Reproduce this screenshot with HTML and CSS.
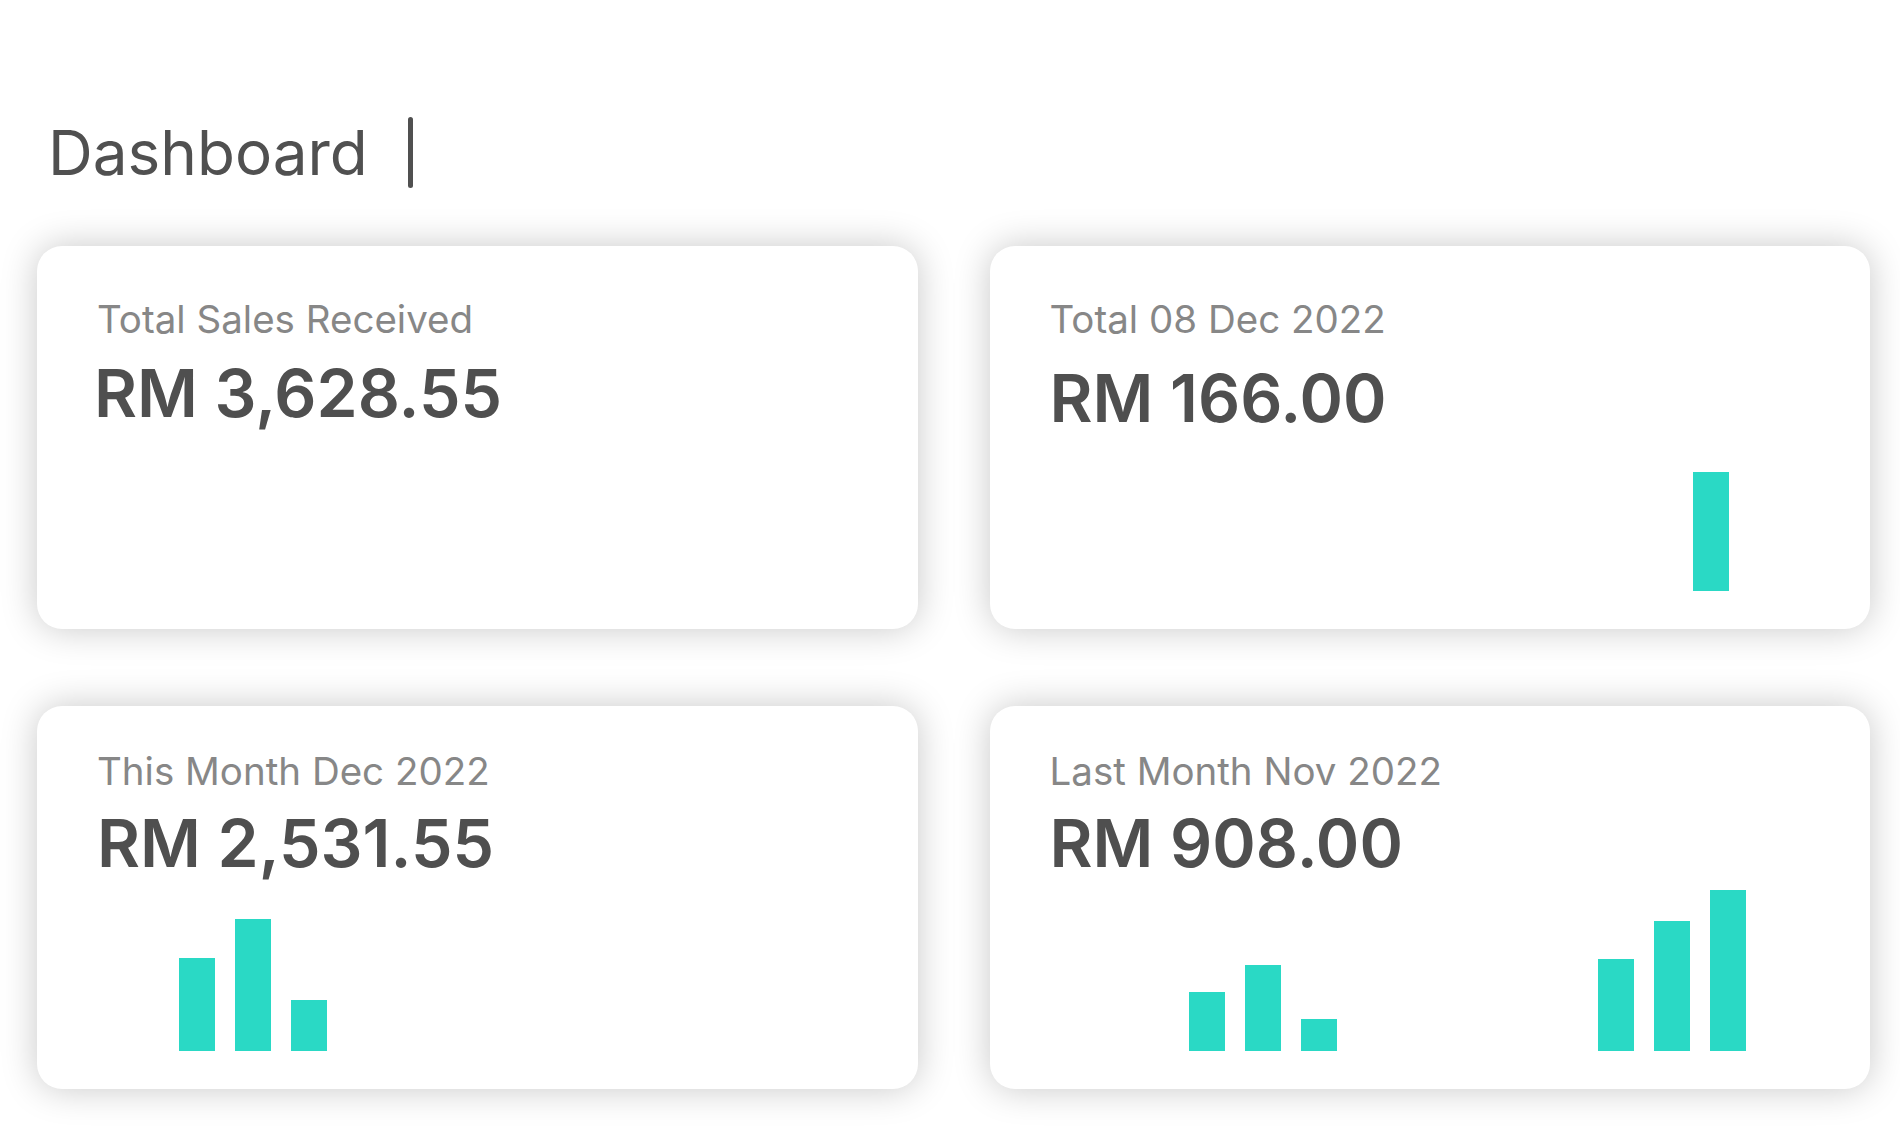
FILE: index.html
```html
<!DOCTYPE html>
<html lang="en">
<head>
  <meta charset="UTF-8">
  <meta name="viewport" content="width=device-width, initial-scale=1.0">
  <title>Dashboard</title>
  <link rel="stylesheet" href="styles.css">
</head>
<body>
  <div class="page">
    <div class="page-title">
      <h1>Dashboard</h1>
      <span class="title-divider"></span>
    </div>

    <div class="cards">
      <div class="card card-upper">
        <div class="card-label">Total Sales Received</div>
        <div class="card-value">RM 3,628.55</div>
      </div>

      <div class="card card-upper card-day">
        <div class="card-label">Total 08 Dec 2022</div>
        <div class="card-value">RM 166.00</div>
        <div class="chart">
          <div class="bar-group group-day">
            <div class="bar" style="height: 119px"></div>
          </div>
        </div>
      </div>

      <div class="card">
        <div class="card-label">This Month Dec 2022</div>
        <div class="card-value">RM 2,531.55</div>
        <div class="chart">
          <div class="bar-group group-month">
            <div class="bar" style="height: 93px"></div>
            <div class="bar" style="height: 132px"></div>
            <div class="bar" style="height: 51px"></div>
          </div>
        </div>
      </div>

      <div class="card">
        <div class="card-label">Last Month Nov 2022</div>
        <div class="card-value">RM 908.00</div>
        <div class="chart">
          <div class="bar-group group-early">
            <div class="bar" style="height: 59px"></div>
            <div class="bar" style="height: 86px"></div>
            <div class="bar" style="height: 32px"></div>
          </div>
          <div class="bar-group group-late">
            <div class="bar" style="height: 92px"></div>
            <div class="bar" style="height: 130px"></div>
            <div class="bar" style="height: 161px"></div>
          </div>
        </div>
      </div>
    </div>
  </div>
</body>
</html>
```

FILE: styles.css
```css
body {
  margin: 0;
  font-family: Inter, "Open Sans", Arial, sans-serif;
  background-color: #fff;
  color: #505050;
}

.page {
  padding: 117px 30px 40px 37px;
}

.page-title {
  display: flex;
  align-items: center;
  padding-left: 11px;
}

h1 {
  margin: 0;
  font-size: 62px;
  font-weight: 400;
  line-height: 1;
}

.title-divider {
  display: block;
  width: 5px;
  height: 71px;
  margin-left: 40px;
  border-radius: 3px;
  background-color: #505050;
}

.cards {
  display: grid;
  grid-template-columns: 1fr 1fr;
  column-gap: 72px;
  row-gap: 77px;
  margin-top: 58px;
}

.card {
  display: flex;
  flex-direction: column;
  height: 383px;
  box-sizing: border-box;
  padding: 46px 60px 38px;
  background-color: #fff;
  border-radius: 25px;
  box-shadow: 0 0 36px rgba(0, 0, 0, 0.22);
}

.card-label {
  font-size: 38.5px;
  line-height: 1;
  color: #878787;
}

.card-value {
  margin-top: 19px;
  font-size: 66px;
  font-weight: 600;
  line-height: 1;
  color: #4f4f4f;
}

.card-upper {
  padding-top: 54px;
}

.card-upper .card-value {
  margin-top: 21px;
  margin-left: -3px;
}

.card-day .card-value {
  margin-top: 26px;
  margin-left: 0;
}

.chart {
  display: flex;
  align-items: flex-end;
  margin-top: auto;
}

.bar-group {
  display: flex;
  align-items: flex-end;
  gap: 20px;
}

.bar {
  width: 36px;
  background-color: #2ad9c5;
}

.group-day {
  margin-left: 643px;
}

.group-month {
  margin-left: 82px;
}

.group-early {
  margin-left: 139px;
}

.group-late {
  margin-left: 261px;
}
```
